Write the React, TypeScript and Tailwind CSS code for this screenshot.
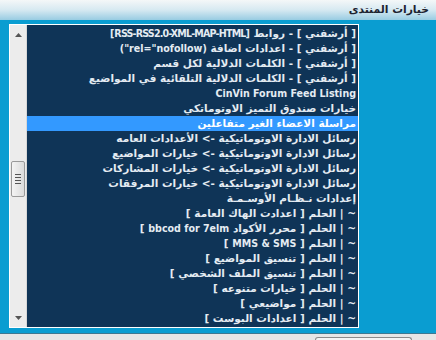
import type { ReactNode } from 'react'

// نص لاتيني بخط أضيق
function L({ children, tight }: { children: ReactNode; tight?: boolean }) {
  return (
    <span className={`font-['DejaVu_Sans_Condensed','DejaVu_Sans',sans-serif] text-[10.6px] ${tight ? 'tracking-[-0.8px]' : ''}`}>
      {children}
    </span>
  )
}

const options: ReactNode[] = [
  <>[ أرشفني ] - روابط <L tight>[RSS-RSS2.0-XML-MAP-HTML]</L></>,
  <>[ أرشفني ] - اعدادات اضافة <L>(rel="nofollow")</L></>,
  '[ أرشفني ] - الكلمات الدلالية لكل قسم',
  '[ أرشفني ] - الكلمات الدلالية التلقائية في المواضيع',
  <L>CinVin Forum Feed Listing</L>,
  'خيارات صندوق التميز الاوتوماتكي',
  'مراسلة الاعضاء الغير متفاعلين',
  'رسائل الادارة الاوتوماتيكية -> الأعدادات العامه',
  'رسائل الادارة الاوتوماتيكية -> خيارات المواضيع',
  'رسائل الادارة الاوتوماتيكية -> خيارات المشاركات',
  'رسائل الادارة الاوتوماتيكية -> خيارات المرفقات',
  'إعدادات نـظـام الأوسـمـة',
  '~ | الحلم [ اعدادت الهاك العامة ]',
  <>~ | الحلم [ محرر الأكواد <L>bbcod for 7elm</L> ]</>,
  <>~ | الحلم [ <L>MMS &amp; SMS</L> ]</>,
  '~ | الحلم [ تنسيق المواضيع ]',
  '~ | الحلم [ تنسيق الملف الشخصي ]',
  '~ | الحلم [ خيارات متنوعه ]',
  '~ | الحلم [ مواضيعي ]',
  '~ | الحلم [ اعدادات البوست ]',
]

const selected = 6

// شريط التمرير الجانبي
function Scrollbar() {
  return (
    <div className="w-[17px] shrink-0 bg-[#ececec] border-r border-[#d8d8d8] flex flex-col items-center">
      <div className="h-[20px] flex items-center justify-center">
        <svg width="7" height="4" viewBox="0 0 7 4">
          <path d="M0 4 L3.5 0 L7 4 Z" fill="#555" />
        </svg>
      </div>
      <div className="h-[116px]" />
      <div className="w-[14px] h-[36px] rounded-[2px] border border-[#9a9a9a] bg-gradient-to-r from-[#f4f4f4] to-[#dcdcdc] flex flex-col items-center justify-center gap-[2px]">
        <div className="w-[6px] h-px bg-[#555]" />
        <div className="w-[6px] h-px bg-[#555]" />
        <div className="w-[6px] h-px bg-[#555]" />
        <div className="w-[6px] h-px bg-[#555]" />
      </div>
      <div className="flex-1" />
      <div className="h-[18px] flex items-center justify-center">
        <svg width="7" height="4" viewBox="0 0 7 4">
          <path d="M0 0 L3.5 4 L7 0 Z" fill="#555" />
        </svg>
      </div>
    </div>
  )
}

export default function App() {
  return (
    <div className="w-[436px] h-[340px] overflow-hidden flex flex-col bg-[#e6e6e6] font-['DejaVu_Sans',sans-serif]">
      {/* العنوان */}
      <div className="h-[20px] shrink-0 bg-gradient-to-b from-[#f4f7f8] via-[#d6e9f1] to-[#98cce2] flex items-center justify-end pr-[7px]">
        <span dir="rtl" className="text-[10.75px] font-bold text-[#1c2230]">خيارات المنتدى</span>
      </div>
      <div className="h-px bg-[#17394d]" />

      <div className="bg-[#0a9dd1] pt-[4px] pb-[5px] pl-[9px] border-b border-[#3d7891]">
        <div className="w-[350px] border border-white flex">
          <Scrollbar />
          <div dir="rtl" className="flex-1 bg-[#0f3457] py-px">
            {options.map((o, i) => (
              <div
                key={i}
                className={`h-[15px] leading-[15px] pr-[2px] text-[10.5px] font-bold whitespace-nowrap overflow-hidden ${
                  i === selected ? 'bg-[#3399ff] text-white' : 'text-[#e4ebf2]'
                }`}
              >
                {o}
              </div>
            ))}
          </div>
        </div>
      </div>

      {/* زر أسفل */}
      <div className="flex justify-end pr-[24px] pt-[3px]">
        <div className="w-[97px] h-[12px] rounded-t-[3px] border border-b-0 border-[#8a8a8a] bg-[#f4f4f4]" />
      </div>
    </div>
  )
}
